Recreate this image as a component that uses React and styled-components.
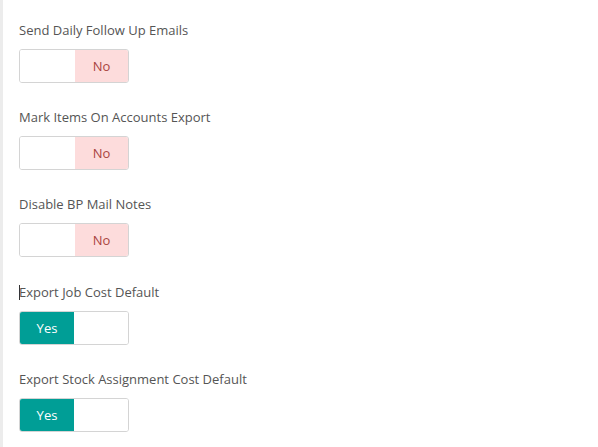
import React from "react";
import styled, { createGlobalStyle } from "styled-components";

const Global = createGlobalStyle`
  html, body { margin: 0; padding: 0; background: #fff; }
  body { font-family: "Open Sans", "Noto Sans", sans-serif; }
`;

const Page = styled.div`
  display: flex;
  min-height: 447px;
`;

const Stripe = styled.div`
  width: 3px;
  flex: none;
  background: #ececec;
`;

const Content = styled.div`
  flex: 1;
  padding: 21px 0 0 16px;
  display: flex;
  flex-direction: column;
  gap: 25.2px;
`;

const Field = styled.div`
  display: flex;
  flex-direction: column;
  gap: 10px;
`;

const Label = styled.div`
  font-size: 13px;
  line-height: 18px;
  color: #555;
`;

const Caret = styled.span`
  display: inline-block;
  width: 1px;
  height: 15px;
  background: #333;
  vertical-align: -3px;
  margin-right: -1px;
`;

const Toggle = styled.div`
  display: flex;
  width: 110px;
  height: 34px;
  box-sizing: border-box;
  border: 1px solid #d4d4d4;
  border-radius: 3px;
  overflow: hidden;
  background: #fff;
`;

const Half = styled.div`
  display: flex;
  align-items: center;
  justify-content: center;
  font-size: 13px;
  width: ${(p) => p.$w}px;
  flex: none;
  background: ${(p) => (p.$kind === "yes" ? "#009e96" : p.$kind === "no" ? "#fddcdc" : "#fff")};
  color: ${(p) => (p.$kind === "yes" ? "#fff" : "#a94442")};
`;

const fields = [
  { label: "Send Daily Follow Up Emails", value: false },
  { label: "Mark Items On Accounts Export", value: false },
  { label: "Disable BP Mail Notes", value: false },
  { label: "Export Job Cost Default", value: true, caret: true },
  { label: "Export Stock Assignment Cost Default", value: true },
];

export default function App() {
  return (
    <>
      <Global />
      <Page>
        <Stripe />
        <Content>
          {fields.map((f) => (
            <Field key={f.label}>
              <Label>
                {f.caret && <Caret />}
                {f.label}
              </Label>
              <Toggle>
                {f.value ? (
                  <>
                    <Half $kind="yes" $w={54}>Yes</Half>
                    <Half $kind="off" $w={54} />
                  </>
                ) : (
                  <>
                    <Half $kind="off" $w={55} />
                    <Half $kind="no" $w={53}>No</Half>
                  </>
                )}
              </Toggle>
            </Field>
          ))}
        </Content>
      </Page>
    </>
  );
}
